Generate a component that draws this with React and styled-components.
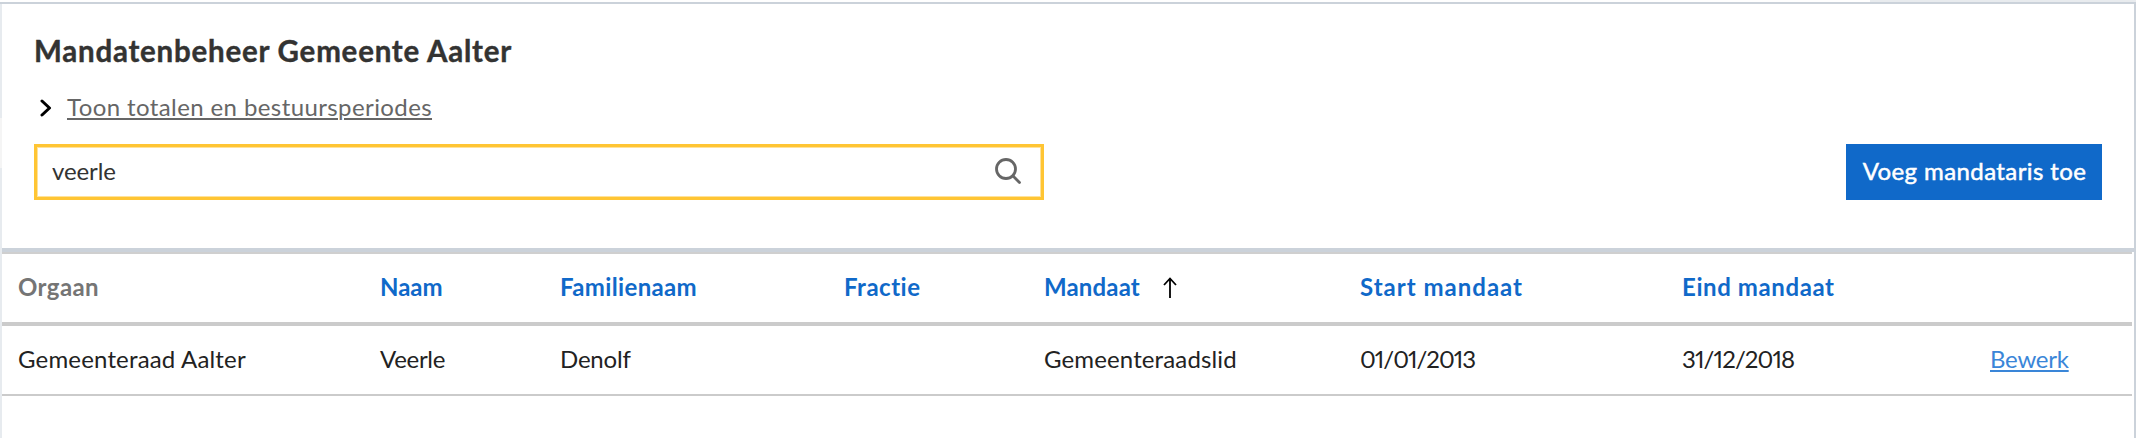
import React from "react";
import styled, { createGlobalStyle } from "styled-components";

const GlobalStyle = createGlobalStyle`
  *, *::before, *::after { box-sizing: border-box; }
  body { margin: 0; background: #fff; font-family: Lato, "Open Sans", sans-serif; font-size: 24px; }
`;

const Page = styled.main`
  display: flex;
  flex-direction: column;
  height: 438px;
  overflow: hidden;
`;

const TabEdge = styled.div`
  flex: none;
  height: 2px;
  margin-left: 1870px;
  background: #e8ebee;
`;

const Body = styled.div`
  flex: 1;
  display: flex;
  border-top: 2px solid #cbd2da;
  border-right: 2px solid #cbd2da;
`;

const Gutter = styled.div`
  flex: none;
  width: 2px;
  background: linear-gradient(#e7ebef 114px, #f5f5f5 114px, #f5f5f5 164px, #e7ebef 164px);
`;

const Panel = styled.div`
  flex: 1;
`;

const Header = styled.header`
  height: 248px;
  padding: 25px 32px 0;
  border-bottom: 4px solid #cbd2da;
`;

const Title = styled.h1`
  margin: 0;
  font-size: 29.5px;
  line-height: 43px;
  font-weight: 700;
  color: #333332;
  letter-spacing: 0.77px;
  -webkit-text-stroke: 0.4px #333332;
`;

const Toggle = styled.button`
  display: flex;
  align-items: center;
  gap: 15px;
  height: 35px;
  margin: 17px 0 0;
  padding: 0 0 0 6px;
  border: 0;
  background: none;
  font: inherit;
  color: #666;
`;

const Toolbar = styled.div`
  display: flex;
  justify-content: space-between;
  margin-top: 20px;
`;

const Search = styled.label`
  display: flex;
  align-items: center;
  width: 1010px;
  height: 56px;
  padding: 0 20px 0 15px;
  border: 3px solid #ffc533;
  box-shadow: inset 0 0 0 1px #ffe29a;
`;

const SearchInput = styled.input`
  flex: 1;
  border: 0;
  padding: 0 0 3px;
  outline: 0;
  background: none;
  font: inherit;
  color: #333332;
  letter-spacing: -0.1px;
`;

const AddButton = styled.button`
  width: 256px;
  height: 56px;
  padding: 0 0 3px 1px;
  border: 0;
  background: #1069c9;
  color: #fff;
  font: inherit;
  -webkit-text-stroke: 0.5px #fff;
`;

const Text = styled.span`
  letter-spacing: ${(p) => p.$track || 0}px;
  white-space: nowrap;
`;

const Underlined = styled(Text)`
  text-decoration: underline;
  text-decoration-thickness: 2px;
  text-underline-offset: 2px;
`;

const Table = styled.table`
  width: 2130px;
  table-layout: fixed;
  border-collapse: separate;
  border-spacing: 0;
  border-top: 2px solid #cfcfcf;
`;

const Col = styled.col`
  width: ${(p) => p.$w}px;
`;

const HeadCell = styled.th`
  height: 72px;
  padding: 0 0 3px 16px;
  border-bottom: 4px solid #cbcbcb;
  text-align: left;
  font-weight: 700;
  color: ${(p) => (p.$muted ? "#757575" : "#1069c9")};
`;

const HeadLabel = styled.span`
  display: flex;
  align-items: center;
  gap: 23px;
  height: 29px;
`;

const Cell = styled.td`
  height: 70px;
  padding: 0 0 3px 16px;
  border-bottom: 2px solid #cbcbcb;
  color: #222;
  font-variant-numeric: proportional-nums;
`;

const EditLink = styled(Underlined)`
  color: #3a86d8;
`;

const ChevronIcon = styled.svg`
  margin-top: 2px;
`;

const SearchIcon = styled.svg`
  margin-bottom: 2px;
`;

const SortIcon = styled.svg`
  margin-top: 3px;
`;

const columns = [
  { label: "Orgaan", value: "Gemeenteraad Aalter", w: 362, muted: true, headTrack: 0.4, track: 0.17 },
  { label: "Naam", value: "Veerle", w: 180, track: -0.3 },
  { label: "Familienaam", value: "Denolf", w: 284, headTrack: 0.35, track: -0.2 },
  { label: "Fractie", value: "", w: 200, headTrack: 0.5 },
  { label: "Mandaat", value: "Gemeenteraadslid", w: 316, sorted: true, headTrack: 0.15, track: 0.13 },
  { label: "Start mandaat", value: "01/01/2013", w: 322, headTrack: 1, track: -1 },
  { label: "Eind mandaat", value: "31/12/2018", w: 308, headTrack: 0.6, track: -0.88 },
];

const Chevron = () => (
  <ChevronIcon width="12" height="18" viewBox="0 0 12 18" fill="none" stroke="#000" strokeWidth="3">
    <path d="M2 2 L9.5 9 L2 16" strokeLinejoin="round" strokeLinecap="round" />
  </ChevronIcon>
);

const Magnifier = () => (
  <SearchIcon width="26" height="26" viewBox="0 0 26 26" fill="none" stroke="#666" strokeWidth="2.8">
    <circle cx="11" cy="11" r="9.5" />
    <path d="M17.8 17.8 L24.5 24.5" strokeLinecap="round" />
  </SearchIcon>
);

const ArrowUp = () => (
  <SortIcon width="14" height="22" viewBox="0 0 14 22" fill="none" stroke="#000" strokeWidth="1.8">
    <path d="M7 21 V1.5 M1 8 L7 1.5 L13 8" />
  </SortIcon>
);

export default function App() {
  return (
    <Page>
      <GlobalStyle />
      <TabEdge />
      <Body>
        <Gutter />
        <Panel>
          <Header>
            <Title>Mandatenbeheer Gemeente Aalter</Title>
            <Toggle>
              <Chevron />
              <Underlined $track={0.4}>Toon totalen en bestuursperiodes</Underlined>
            </Toggle>
            <Toolbar>
              <Search>
                <SearchInput defaultValue="veerle" />
                <Magnifier />
              </Search>
              <AddButton><Text $track={0.4}>Voeg mandataris toe</Text></AddButton>
            </Toolbar>
          </Header>
          <Table>
            <colgroup>
              {columns.map((c) => <Col key={c.label} $w={c.w} />)}
              <Col $w={158} />
            </colgroup>
            <thead>
              <tr>
                {columns.map((c) => (
                  <HeadCell key={c.label} $muted={c.muted}>
                    <HeadLabel>
                      <Text $track={c.headTrack}>{c.label}</Text>
                      {c.sorted && <ArrowUp />}
                    </HeadLabel>
                  </HeadCell>
                ))}
                <HeadCell />
              </tr>
            </thead>
            <tbody>
              <tr>
                {columns.map((c) => (
                  <Cell key={c.label}><Text $track={c.track}>{c.value}</Text></Cell>
                ))}
                <Cell><EditLink $track={-0.25}>Bewerk</EditLink></Cell>
              </tr>
            </tbody>
          </Table>
        </Panel>
      </Body>
    </Page>
  );
}
